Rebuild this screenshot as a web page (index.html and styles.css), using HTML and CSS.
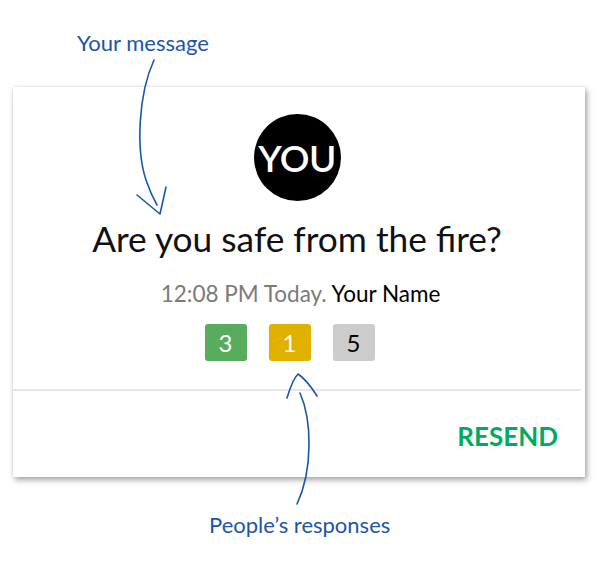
FILE: index.html
```html
<!DOCTYPE html>
<html>
<head>
<meta charset="utf-8">
<link rel="stylesheet" href="styles.css">
</head>
<body>
<div class="page">
  <div class="note note-top">Your message</div>
  <div class="card">
    <div class="card-body">
      <div class="avatar">YOU</div>
      <h1 class="question">Are you safe from the fire?</h1>
      <div class="meta"><span class="time">12:08 PM Today.</span> <span class="name">Your Name</span></div>
      <div class="badges">
        <span class="badge badge-green">3</span>
        <span class="badge badge-yellow">1</span>
        <span class="badge badge-gray">5</span>
      </div>
    </div>
    <div class="card-foot">
      <span class="resend">RESEND</span>
    </div>
  </div>
  <div class="note note-bottom">People’s responses</div>
  <svg class="arrows" width="601" height="576" viewBox="0 0 601 576" fill="none" stroke="#1a56a8" stroke-width="1.6" stroke-linecap="round" stroke-linejoin="round">
    <path d="M154 60 C 138 95, 136 150, 146 180 C 150 192, 153 198, 157 205"/>
    <path d="M137 195 L 160 214 L 166 187"/>
    <path d="M300 393 C 312 420, 313 470, 297 504"/>
    <path d="M287 398 C 290 388, 294 378, 298 374 C 304 378, 312 388, 317 396"/>
  </svg>
</div>
</body>
</html>
```

FILE: styles.css
```css
html, body {
  margin: 0;
  padding: 0;
  background: #ffffff;
}
.page {
  position: relative;
  width: 601px;
  height: 576px;
  font-family: Lato, "Liberation Sans", sans-serif;
  display: flex;
  flex-direction: column;
}
.note {
  color: #1a56a8;
  font-size: 22px;
  line-height: 26px;
}
.note-top {
  margin: 30px 0 0 77px;
}
.card {
  margin: 31px 0 0 13px;
  width: 572px;
  height: 390px;
  background: #fff;
  box-shadow: 2px 3px 6px rgba(0,0,0,0.35), 0 0 3px rgba(0,0,0,0.1);
  display: flex;
  flex-direction: column;
}
.card-body {
  height: 304px;
  border-bottom: 2px solid #e6e6e6;
  margin-right: 4px;
  display: flex;
  flex-direction: column;
  align-items: center;
  padding-top: 27px;
  box-sizing: border-box;
}
.avatar {
  width: 87px;
  height: 87px;
  border-radius: 50%;
  background: #000;
  color: #fff;
  font-size: 37px;
  font-weight: 600;
  display: flex;
  align-items: center;
  justify-content: center;
  letter-spacing: -0.5px;
}
.question {
  margin: 16px 0 0 0;
  font-size: 35.3px;
  font-weight: 400;
  line-height: 44px;
  color: #111;
}
.meta {
  margin-top: 20px;
  font-size: 22.5px;
  line-height: 26px;
  margin-left: 7px;
}
.time { color: #7a7a7a; }
.name { color: #000; }
.badges {
  margin-top: 17px;
  display: flex;
  gap: 22px;
  margin-left: -15px;
}
.badge {
  width: 42px;
  height: 37px;
  border-radius: 3px;
  display: flex;
  align-items: center;
  justify-content: center;
  font-size: 24px;
}
.badge-green { background: #59ab5e; color: #fff; }
.badge-yellow { background: #e1b100; color: #fff; }
.badge-gray { background: #cccccc; color: #000; }
.card-foot {
  flex: 1;
  display: flex;
  justify-content: flex-end;
  align-items: flex-start;
  padding: 30px 27px 0 0;
}
.resend {
  color: #00ab5f;
  font-weight: 700;
  font-size: 26px;
  line-height: 30px;
}
.note-bottom {
  margin: 35px 0 0 209px;
}
.arrows {
  position: absolute;
  left: 0;
  top: 0;
  pointer-events: none;
}
```
